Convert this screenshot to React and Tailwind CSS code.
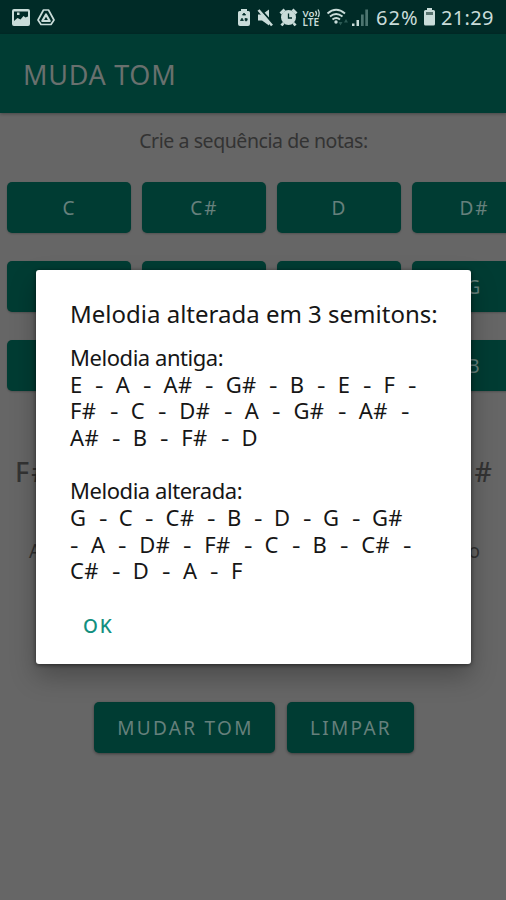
const NOTE_ROWS = [
  ["C", "C#", "D", "D#"],
  ["E", "F", "F#", "G"],
  ["G#", "A", "A#", "B"],
];

function StatusBar() {
  return (
    <div className="flex h-[34px] shrink-0 items-center bg-[#002b27] text-[#c9dcd9]">
      <svg className="h-[34px] w-[368px] shrink-0" viewBox="0 0 368 34" fill="currentColor">
        {/* gallery */}
        <path fillRule="evenodd" d="M14 9h14q2 0 2 2v13q0 2-2 2H14q-2 0-2-2V11q0-2 2-2zM14 11.500v9.500l3.500-3 3 1.500 3-3.500 2 1.500 2.500-1v-5zM17 12.500h2.500v2.500H17z" />
        {/* drive */}
        <path d="M43.500 10h5l5.500 10-3 4.500H41L38 20z" fill="none" stroke="currentColor" strokeWidth="1.700" strokeLinejoin="round" />
        <path d="M46 14.500l3.700 6.500h-7.400z" fill="none" stroke="currentColor" strokeWidth="2.200" strokeLinejoin="round" />
        {/* battery saver */}
        <path d="M241 9h6v2h1.500q1.500 0 1.500 1.500V24q0 2-2 2h-8q-2 0-2-2V12.500q0-1.500 1.500-1.500h1.500z" />
        <path d="M242.500 15l1.500-2 1.700 2zM240.500 20.500l1.500-2.300 1.400 2.300zM245 18.500l2.300.3-.5 2h-1.500z" fill="#002b27" stroke="#002b27" strokeWidth=".8" />
        {/* mute */}
        <path d="M258 14.500h4l7-5v16l-7-5h-4z" />
        <path d="M259.500 8.500l14 15.500" stroke="#002b27" strokeWidth="2" />
        <path d="M258.500 10l13.500 15.500" stroke="currentColor" strokeWidth="2.600" />
        {/* alarm */}
        <circle cx="288.500" cy="17.500" r="7.500" />
        <path d="M280.500 13.500l4-4M296.500 13.500l-4-4M283.500 23l-2 2.500M293.500 23l2 2.500" stroke="currentColor" strokeWidth="2.800" />
        <path d="M288.500 13.500v4.500h3.500" stroke="#002b27" strokeWidth="1.300" fill="none" />
        {/* VoLTE */}
        <text x="302.500" y="16.500" fontSize="9.500" fontWeight="600" textLength="12" lengthAdjust="spacingAndGlyphs" fontFamily="Noto Sans, sans-serif">Vo</text>
        <path d="M315.500 11q2 2.500 0 5M318 9.500q2.500 4 0 7.500" fill="none" stroke="currentColor" strokeWidth="1.300" />
        <text x="302.500" y="26" fontSize="11" fontWeight="600" textLength="16.500" lengthAdjust="spacingAndGlyphs" fontFamily="Noto Sans, sans-serif">LTE</text>
        {/* wifi */}
        <path d="M327.500 13.500q8.500-7.500 17.500 0M330 16.500q6-5 12.500 0M332.500 19.500q3.700-3 7.500 0" fill="none" stroke="currentColor" strokeWidth="1.900" />
        <circle cx="336" cy="22" r="1.700" />
        <path d="M338.500 22h4l-2 3.500zM344 22.500l2-3.500 2 3.500z" fill="#2c5a54" />
        {/* signal */}
        <path d="M352 23.500h2.500V26H352zM356.500 20h2.500v6h-2.500z" />
        <path d="M361 14.500h2.700V26H361zM365.300 9.500h2.700V26h-2.700z" fill="#4d7570" />
      </svg>
      <span className="ml-[8px] w-[43px] whitespace-nowrap pt-[2px] text-[20px] leading-none tracking-[1px]">62%</span>
      <svg className="ml-[5px] h-[18px] w-[11px] shrink-0" viewBox="0 0 11 18" fill="currentColor">
        <path d="M3 0h5v2h1.500Q11 2 11 3.500V16q0 1.500-1.500 1.500h-8Q0 17.500 0 16V3.500Q0 2 1.500 2H3z" />
        <path d="M2 4h7v3H2z" fill="#58736f" />
      </svg>
      <span className="ml-[6px] whitespace-nowrap pt-[2px] text-[20px] leading-none tracking-[0.3px]">21:29</span>
    </div>
  );
}

function NoteButton({ label }) {
  return (
    <div className="flex h-[51px] w-[124px] shrink-0 items-center justify-center rounded-[5px] bg-[#003c33] pl-[1px] pt-[2px] text-[19px] tracking-[2px] text-[#66807c] shadow-[0_1px_2px_rgba(0,0,0,0.2)]">
      {label}
    </div>
  );
}

function MelodyLine({ notes, width }) {
  return (
    <div className="flex h-[26.7px] items-center justify-between whitespace-nowrap leading-[22px]" style={{ width }}>
      {notes.split(" ").map((n, i) => (
        <span key={i} className={n === "-" ? "w-[8px] origin-left scale-x-120" : "tracking-[0.4px]"}>{n}</span>
      ))}
    </div>
  );
}

function MelodyDialog() {
  return (
    <div className="absolute left-[36px] top-[270px] flex h-[394px] w-[435px] flex-col rounded-[3px] bg-white pl-[34px] text-[22px] text-[#161616] shadow-[0_12px_26px_0px_rgba(0,0,0,0.28),0_1px_4px_rgba(0,0,0,0.55)]">
      <h2 className="mt-[28px] h-[32px] whitespace-nowrap text-[24px] leading-[32px]">Melodia alterada em 3 semitons:</h2>
      <div className="mt-[13.500px]">
        <div className="h-[26.700px] whitespace-nowrap leading-[26.700px] tracking-[-0.450px]">Melodia antiga:</div>
        <MelodyLine notes="E - A - A# - G# - B - E - F -" width={346} />
        <MelodyLine notes="F# - C - D# - A - G# - A# -" width={339} />
        <MelodyLine notes="A# - B - F# - D" width={188} />
      </div>
      <div className="mt-[26.700px]">
        <div className="h-[26.700px] whitespace-nowrap leading-[26.700px] tracking-[-0.450px]">Melodia alterada:</div>
        <MelodyLine notes="G - C - C# - B - D - G - G#" width={333} />
        <MelodyLine notes="- A - D# - F# - C - B - C# -" width={341} />
        <MelodyLine notes="C# - D - A - F" width={173} />
      </div>
      <button className="ml-[13px] mt-[26.500px] h-[32px] self-start text-[19px] font-medium leading-[32px] tracking-[1.800px] text-[#138f80]">OK</button>
    </div>
  );
}

export default function App() {
  return (
    <div className="relative flex h-[900px] w-[506px] flex-col overflow-hidden bg-[#666666] font-['Noto_Sans',sans-serif]">
      <StatusBar />
      <header className="flex h-[79px] shrink-0 items-center bg-[#003c33] pl-[23px] pt-[4px] text-[27px] text-[#69706e] shadow-[0_1px_3px_rgba(0,0,0,0.3)]">
        <span className="tracking-[0.700px]">MUDA TOM</span>
      </header>
      <p className="mt-[14px] h-[28px] pl-px text-center text-[19.500px] leading-[28px] tracking-[-0.430px] text-[#333333]">Crie a sequência de notas:</p>
      <div className="mt-[27px] flex flex-col gap-[28px] pl-[7px]">
        {NOTE_ROWS.map((row) => (
          <div key={row[0]} className="flex gap-[11px]">
            {row.map((note) => (
              <NoteButton key={note} label={note} />
            ))}
          </div>
        ))}
      </div>
      <div className="mt-[61px] flex h-[40px] items-center justify-between pl-[15px] pr-[14px] text-[27px] font-medium text-[#333333]">
        <span className="tracking-[2px]">F#</span>
        <span>
          <span className="tracking-[5px]">G</span>#
        </span>
      </div>
      <div className="mt-[43px] flex h-[32px] items-center justify-between pl-[29px] pr-[26px] text-[19px] text-[#333333]">
        <span>A</span>
        <span>o</span>
      </div>
      <div className="mt-[135px] flex gap-[12px] pl-[94px] text-[19px] text-[#66807c]">
        <div className="flex h-[51px] w-[181px] items-center justify-center whitespace-nowrap rounded-[5px] bg-[#003c33] pl-[2px] pt-[2px] tracking-[2.300px] shadow-[0_1px_3px_rgba(0,0,0,0.4)]">MUDAR TOM</div>
        <div className="flex h-[51px] w-[127px] items-center justify-center whitespace-nowrap rounded-[5px] bg-[#003c33] pl-[1px] pt-[2px] tracking-[2.300px] shadow-[0_1px_3px_rgba(0,0,0,0.4)]">LIMPAR</div>
      </div>
      <MelodyDialog />
    </div>
  );
}
